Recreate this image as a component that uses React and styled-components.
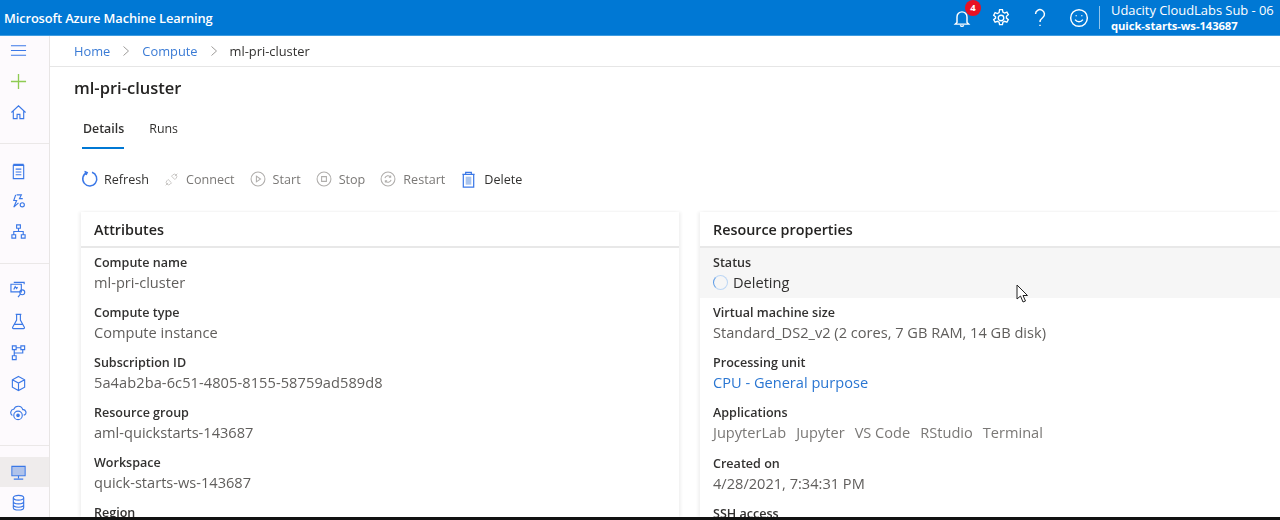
import React from "react";
import styled, { createGlobalStyle } from "styled-components";

const Global = createGlobalStyle`
  html, body { margin: 0; padding: 0; background: #fff; }
  body { font-family: "Open Sans", "Noto Sans", sans-serif; color: #323130; overflow: hidden; }
`;

const Page = styled.div`
  position: relative; width: 1280px; height: 520px; display: flex; flex-direction: column; overflow: hidden;
  filter: blur(0.35px);
`;
const TopBar = styled.header`
  flex: 0 0 35px; background: #0078d4; color: #fff; display: flex; align-items: center; padding: 0 0 0 4px;
  border-bottom: 1px solid #3f9ce0;
`;
const Brand = styled.div`font-size: 12.87px; font-weight: 600; letter-spacing: -0.12px; flex: 1;`;
const TopIcons = styled.div`display: flex; align-items: center; gap: 19px; margin-right: 10px;`;
const TopIcon = styled.span`position: relative; width: 20px; height: 20px; display: flex; align-items: center; justify-content: center;`;
const Badge = styled.span`
  position: absolute; top: -8px; left: 13px; width: 16px; height: 16px; border-radius: 50%; background: #e81123;
  font-size: 9.5px; font-weight: 700; display: flex; align-items: center; justify-content: center;
`;
const Divider = styled.div`width: 1px; height: 23px; background: #8fc4ec; margin-right: 11px;`;
const Account = styled.div`width: 169px; line-height: 15px; white-space: nowrap; margin-top: 1px;`;
const AccountName = styled.div`font-size: 12.95px; letter-spacing: -0.03px;`;
const AccountWs = styled.div`font-size: 11.3px; font-weight: 700; letter-spacing: -0.1px;`;

const Body = styled.div`flex: 1; display: flex; min-height: 0;`;
const Side = styled.nav`
  flex: 0 0 49px; background: #fdfafd; border-right: 1px solid #e8e5e5; display: flex; flex-direction: column; overflow: hidden;
`;
const SideGroup = styled.div`
  display: flex; flex-direction: column; padding: ${p => p.$pad || "0"};
  border-bottom: ${p => (p.$last ? "none" : "1px solid #ebe8e8")};
`;
const SideItem = styled.div`
  height: ${p => p.$h || 30}px; padding-right: 13px; display: flex; align-items: center; justify-content: center; flex: none; color: #3b78e7;
  background: ${p => (p.$active ? "#efecec" : "transparent")};
`;

const Main = styled.main`flex: 1; min-width: 0; display: flex; flex-direction: column; overflow: hidden;`;
const Crumbs = styled.div`
  flex: 0 0 30px; border-bottom: 1px solid #e6e6e6; display: flex; align-items: center; padding-left: 24px; font-size: 12.85px;
`;
const CrumbLink = styled.span`color: #3a7bd5;`;
const CrumbSep = styled.span`display: flex; margin: 0 12px; color: #9d9b99;`;
const CrumbNow = styled.span`color: #323130;`;
const Title = styled.h1`margin: 10px 0 0 24px; font-size: 16.5px; font-weight: 600; line-height: 22px; color: #252423;`;
const Tabs = styled.div`display: flex; gap: 25px; margin: 21px 0 0 33px;`;
const Tab = styled.div`
  position: relative; font-size: 12.4px; line-height: 18px; padding-bottom: 11px; color: #323130; font-weight: ${p => (p.$active ? 600 : 400)};
  &::after { content: ""; position: absolute; left: -1px; right: 0; bottom: 0; height: 2px; background: ${p => (p.$active ? "#0078d4" : "transparent")}; }
`;
const Toolbar = styled.div`display: flex; align-items: center; gap: 15px; margin: 20px 0 0 31px; height: 20px;`;
const Tool = styled.div`
  display: flex; align-items: center; gap: ${p => p.$gap || 7}px; font-size: 12.6px; color: ${p => (p.$off ? "#7a7876" : "#323130")};
`;
const Cards = styled.div`flex: 1; display: flex; gap: 21px; margin: 23px 0 0 31px; min-height: 0;`;
const Card = styled.section`
  flex: ${p => (p.$wide ? "0 0 580px" : "0 0 598px")}; box-shadow: -2px 0 3px rgba(0,0,0,.06), 2px 0 3px rgba(0,0,0,.06);
`;
const CardHead = styled.h2`
  margin: 0; height: 34px; padding-left: 13px; font-size: 14.35px; font-weight: 600; line-height: 36px; color: #252423;
  border-bottom: 2px solid #e8e8e8; box-sizing: content-box;
`;
const Row = styled.div`
  height: 50px; padding: 6px 0 0 13px; box-sizing: border-box; background: ${p => (p.$hi ? "#f6f6f6" : "transparent")};
  margin-top: ${p => p.$mt || 0}px;
`;
const Label = styled.div`font-size: 12.55px; font-weight: 600; line-height: 18px; color: #323130;`;
const Value = styled.div`
  display: flex; align-items: center; gap: 5px; font-size: 14.6px; line-height: 21px; white-space: nowrap; letter-spacing: ${p => p.$tight ? "0.08px" : "0"};
  color: ${p => p.$link ? "#2a76d2" : p.$dark ? "#323130" : "#605e5c"};
`;
const Apps = styled.span`display: flex; gap: 10px; color: #7a7876;`;
const Spinner = styled.span`
  width: 13px; height: 13px; border-radius: 50%; border: 1.5px solid #bcd6f4; border-left-color: #5b9be6; flex: none;
`;
const Cursor = styled.svg`position: absolute; left: 1016px; top: 284px;`;
const BottomStrip = styled.div`flex: 0 0 3px; background: #111;`;

const S = { fill: "none", stroke: "currentColor", strokeWidth: 1.2 };
const Ic = ({ size = 17, children, color }) => (
  <svg width={size} height={size} viewBox="0 0 18 18" style={color ? { color } : undefined} {...S}>{children}</svg>
);

const Chevron = () => (
  <CrumbSep><svg width="8" height="12" viewBox="0 0 8 12" fill="none" stroke="currentColor"><path d="M1.5 1.5 6.5 6l-5 4.5" /></svg></CrumbSep>
);

const side = {
  menu: <path d="M1 4h16M1 9h16M1 14h16" />,
  plus: <path d="M9 1v16M1 9h16" stroke="#8ecb52" strokeWidth="1.4" />,
  home: <path d="M1.5 9 9 2l7.5 7M3.5 7.5V15.500h4v-4.500h3v4.500h4V7.500" />,
  note: <path d="M3.500 2.500h11v14h-11zM3.500 1.500h11M6 6.500h6M6 9.500h6M6 12.500h6" />,
  bolt: <><path d="M7 2h5l-2 4h3.500M6 2 4 8h3l-3 7 5-4.500" /><circle cx="13" cy="12.500" r="2.200" /></>,
  net: <path d="M7 2h4v3.500H7zM2 12.500h4V16H2zM12 12.500h4V16h-4zM9 5.500v3.500M4 12.500V9h10v3.500" />,
  lab: <><path d="M1 3.500h11v8H1z" /><path d="M4 1.500h11v2M4 9l1.500-3 1.500 2 1-1.500" /><circle cx="13" cy="12" r="2.600" /><path d="m11 14-2.500 3" /></>,
  flask: <path d="M6 1.500h6M7 2v5.500L2.800 15a1 1 0 0 0 .9 1.500h10.600a1 1 0 0 0 .9-1.500L11 7.500V2M5 12h8" />,
  pipe: <path d="M2.500 2h4v4h-4zM11.500 2h4v4h-4zM2.500 12.500h4v4h-4zM4.500 6v6.500M6.500 4h5M4.500 9.500h9V6" />,
  cube: <path d="M9 1.500 15.500 5v8L9 16.500 2.500 13V5zM2.500 5 9 8.500 15.500 5M9 8.500v8" />,
  cloud: <><path d="M2.500 11A3.500 3.500 0 0 1 4 4.500a5 5 0 0 1 9.500.5 3 3 0 0 1 2 5.500h-1" /><circle cx="8.500" cy="11" r="4.500" /><circle cx="8.500" cy="11" r="1.300" fill="currentColor" /></>,
  screen: <><path d="M2 2.500h14v10H2z" /><path d="M9 12.500v2.500M4 16h10" /><path d="M2.500 3h13v9h-13z" fill="currentColor" fillOpacity=".35" stroke="none" /></>,
  db: <><ellipse cx="9" cy="4" rx="5.500" ry="2.500" /><path d="M3.500 4v10.500c0 1.300 2.500 2.500 5.500 2.500s5.500-1.200 5.500-2.500V4M3.500 8c0 1.300 2.500 2.500 5.500 2.500S14.500 9.300 14.500 8M3.500 11.500c0 1.300 2.500 2.500 5.500 2.500s5.500-1.200 5.500-2.500" /></>,
};

const attrs = [
  ["Compute name", "ml-pri-cluster"],
  ["Compute type", "Compute instance"],
  ["Subscription ID", "5a4ab2ba-6c51-4805-8155-58759ad589d8", true],
  ["Resource group", "aml-quickstarts-143687"],
  ["Workspace", "quick-starts-ws-143687"],
  ["Region"],
];

export default function App() {
  return (
    <Page>
      <Global />
      <TopBar>
        <Brand>Microsoft Azure Machine Learning</Brand>
        <TopIcons>
          <TopIcon>
            <Ic size={20}><path d="M4.500 13V8a4.500 4.500 0 0 1 9 0v5l1.500 1.500H3zM7.500 15.500a1.600 1.600 0 0 0 3 0" strokeWidth="1.300" /></Ic>
            <Badge>4</Badge>
          </TopIcon>
          <TopIcon>
            <Ic size={20}><circle cx="9" cy="9" r="2.500" strokeWidth="1.200" /><path strokeWidth="1.200" d="M7.700 1.500h2.600l.4 2.200 1.500.8 2.100-.8 1.300 2.300-1.700 1.400v1.700l1.700 1.400-1.300 2.300-2.100-.8-1.500.8-.4 2.200H7.700l-.4-2.200-1.500-.8-2.100.8-1.300-2.300 1.700-1.400V7.900L2.400 6.500 3.700 4.200l2.100.8 1.500-.8z" /></Ic>
          </TopIcon>
          <TopIcon>
            <Ic size={20}><path strokeWidth="1.300" d="M5 5.500a4 4 0 1 1 6.500 3.100C10 9.800 9 10.500 9 12.500M9 15v1.200" /></Ic>
          </TopIcon>
          <TopIcon>
            <Ic size={20}><circle cx="9" cy="9" r="7.500" strokeWidth="1.300" /><path strokeWidth="1.300" d="M5.500 10.500c1.800 2.600 5.200 2.600 7 0M6.500 6.500v1M11.500 6.500v1" /></Ic>
          </TopIcon>
        </TopIcons>
        <Divider />
        <Account>
          <AccountName>Udacity CloudLabs Sub - 06</AccountName>
          <AccountWs>quick-starts-ws-143687</AccountWs>
        </Account>
      </TopBar>
      <Body>
        <Side>
          <SideGroup $pad="0 0 15px">
            <SideItem $h={29}><Ic>{side.menu}</Ic></SideItem>
            <SideItem $h={32}><Ic>{side.plus}</Ic></SideItem>
            <SideItem $h={31}><Ic>{side.home}</Ic></SideItem>
          </SideGroup>
          <SideGroup $pad="12px 0 17px">
            <SideItem $h={30}><Ic>{side.note}</Ic></SideItem>
            <SideItem $h={30}><Ic>{side.bolt}</Ic></SideItem>
            <SideItem $h={30}><Ic>{side.net}</Ic></SideItem>
          </SideGroup>
          <SideGroup $pad="10px 0 17px">
            <SideItem $h={31}><Ic>{side.lab}</Ic></SideItem>
            <SideItem $h={32}><Ic>{side.flask}</Ic></SideItem>
            <SideItem $h={31}><Ic>{side.pipe}</Ic></SideItem>
            <SideItem $h={30}><Ic>{side.cube}</Ic></SideItem>
            <SideItem $h={30}><Ic>{side.cloud}</Ic></SideItem>
          </SideGroup>
          <SideGroup $pad="11px 0 0" $last>
            <SideItem $h={30} $active><Ic>{side.screen}</Ic></SideItem>
            <SideItem $h={30}><Ic>{side.db}</Ic></SideItem>
          </SideGroup>
        </Side>
        <Main>
          <Crumbs>
            <CrumbLink>Home</CrumbLink><Chevron />
            <CrumbLink>Compute</CrumbLink><Chevron />
            <CrumbNow>ml-pri-cluster</CrumbNow>
          </Crumbs>
          <Title>ml-pri-cluster</Title>
          <Tabs>
            <Tab $active>Details</Tab>
            <Tab>Runs</Tab>
          </Tabs>
          <Toolbar>
            <Tool $gap={5}>
              <Ic size={18} color="#3b78e7"><path strokeWidth="1.500" d="M6 2.500A7 7 0 1 0 11 2.300M3.500 1.500 6.200 2.600 5 5" /></Ic>
              Refresh
            </Tool>
            <Tool $off>
              <Ic size={15} color="#c8c6c4"><path d="m2 16 3-3M16 2l-3 3M5 9l4 4-1.500 1.500a2.800 2.800 0 0 1-4-4zM13 9 9 5l1.500-1.500a2.800 2.800 0 0 1 4 4z" /></Ic>
              Connect
            </Tool>
            <Tool $off>
              <Ic size={16} color="#b0aeac"><circle cx="9" cy="9" r="7.800" /><path d="m7.200 5.800 4.600 3.200-4.600 3.200z" /></Ic>
              Start
            </Tool>
            <Tool $off>
              <Ic size={16} color="#b0aeac"><circle cx="9" cy="9" r="7.800" /><path d="M6.300 6.300h5.400v5.400H6.300z" /></Ic>
              Stop
            </Tool>
            <Tool $off>
              <Ic size={16} color="#b0aeac"><circle cx="9" cy="9" r="7.800" /><path d="M5.500 8a3.700 3.700 0 0 1 6.500-1.200M12.500 10a3.700 3.700 0 0 1-6.500 1.200M12 5v2h-2M6 13v-2h2" /></Ic>
              Restart
            </Tool>
            <Tool $gap={7}>
              <Ic size={17} color="#3b78e7"><path d="M2.500 3.500h13M6 3.500V1.500h6v2M3.500 3.500v13.500h11V3.500" strokeWidth="1.300" /><path d="M6 6h6v8.500H6z" fill="#a9c4ee" stroke="none" /></Ic>
              Delete
            </Tool>
          </Toolbar>
          <Cards>
            <Card>
              <CardHead>Attributes</CardHead>
              {attrs.map(([k, v, tight]) => (
                <Row key={k}><Label>{k}</Label>{v && <Value $tight={tight}>{v}</Value>}</Row>
              ))}
            </Card>
            <Card $wide>
              <CardHead>Resource properties</CardHead>
              <Row $hi>
                <Label>Status</Label>
                <Value $dark><Spinner />Deleting</Value>
              </Row>
              <Row><Label>Virtual machine size</Label><Value>Standard_DS2_v2 (2 cores, 7 GB RAM, 14 GB disk)</Value></Row>
              <Row><Label>Processing unit</Label><Value $link>CPU - General purpose</Value></Row>
              <Row>
                <Label>Applications</Label>
                <Value><Apps><span>JupyterLab</span><span>Jupyter</span><span>VS Code</span><span>RStudio</span><span>Terminal</span></Apps></Value>
              </Row>
              <Row $mt={1}><Label>Created on</Label><Value>4/28/2021, 7:34:31 PM</Value></Row>
              <Row><Label>SSH access</Label></Row>
            </Card>
          </Cards>
        </Main>
      </Body>
      <BottomStrip />
      <Cursor width="13" height="19" viewBox="0 0 13 19">
        <path d="M1 1v14l3.500-3 2.500 6 2.500-1-2.500-5.500H11.500z" fill="#fff" stroke="#222" strokeWidth="1" />
      </Cursor>
    </Page>
  );
}
